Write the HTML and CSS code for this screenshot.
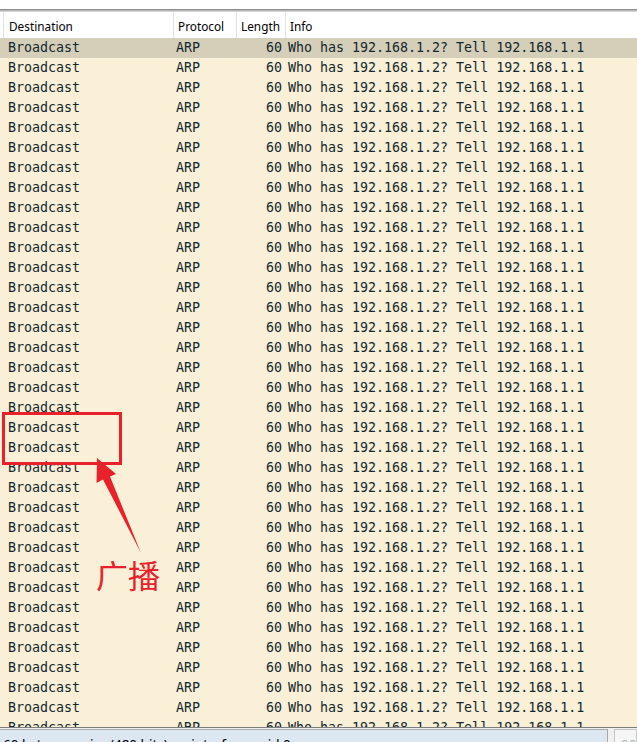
FILE: index.html
```html
<!DOCTYPE html>
<html>
<head>
<meta charset="utf-8">
<link rel="stylesheet" href="styles.css">
</head>
<body>
<div class="app">
  <div class="topstrip"></div>
  <div class="rule"></div>
  <div class="header">
    <div class="hcell dest">Destination</div>
    <div class="hcell">Protocol</div>
    <div class="hcell">Length</div>
    <div class="hcell info">Info</div>
  </div>
  <div class="list" id="list">
    <div class="row sel"><span class="c1">Broadcast</span><span class="c2">ARP</span><span class="c3">60</span><span class="c4">Who has 192.168.1.2? Tell 192.168.1.1</span></div>
  </div>
  <div class="status">
    <div class="field">60 bytes on wire (480 bits) on interface unid 0</div>
    <div class="field2">00</div>
  </div>
</div>
<script>
  var list = document.getElementById('list');
  for (var i = 0; i < 34; i++) {
    var r = document.createElement('div');
    r.className = 'row';
    r.innerHTML = '<span class="c1">Broadcast</span><span class="c2">ARP</span><span class="c3">60</span><span class="c4">Who has 192.168.1.2? Tell 192.168.1.1</span>';
    list.appendChild(r);
  }
  var note = document.createElement('div');
  note.className = 'note';
  note.innerHTML = '<div class="box"></div>' +
    '<svg class="arrow" width="637" height="700" viewBox="0 0 637 700"><polygon points="97,420 116,436 110,438.5 141,515 103,441.5 96.5,445" fill="#e8212a"/></svg>' +
    '<div class="label">广播</div>';
  list.appendChild(note);
</script>
</body>
</html>
```
FILE: styles.css
```css
html, body {
  margin: 0;
  padding: 0;
  background: #ffffff;
}
.app {
  width: 637px;
  height: 742px;
  overflow: hidden;
  display: flex;
  flex-direction: column;
}
.topstrip {
  height: 9px;
  background: #ffffff;
  flex: none;
}
.rule {
  height: 1px;
  border-top: 1px solid #8e8e8e;
  border-bottom: 1px solid #d4d4d4;
  background: #b8b8b8;
  flex: none;
}
.header {
  height: 26px;
  flex: none;
  display: grid;
  grid-template-columns: 173px 63px 49px 1fr;
  font-family: "Noto Sans", "Liberation Sans", sans-serif;
  font-size: 11.8px;
  color: #000000;
  background: #ffffff;
}
.hcell {
  border-left: 1px solid #e3e3e3;
  padding-left: 4px;
  line-height: 28px;
  white-space: nowrap;
  overflow: hidden;
}
.hcell.dest {
  margin-left: 3px;
  padding-left: 5px;
}
.hcell.info {
  padding-left: 4px;
}
.list {
  height: 689px;
  flex: none;
  overflow: hidden;
  background: #faf0d8;
  position: relative;
}
.row {
  height: 20px;
  display: grid;
  grid-template-columns: 173px 63px 49px 1fr;
  font-family: "DejaVu Sans Mono", "Liberation Mono", monospace;
  font-size: 13.3px;
  line-height: 20px;
  color: #12272e;
  background: #faf0d8;
  white-space: nowrap;
}
.row.sel {
  background: #d5ceb9;
}
.c1 { padding-left: 8px; }
.c2 { padding-left: 3px; }
.c3 { text-align: right; padding-right: 3px; }
.c4 { padding-left: 3px; }
.note {
  position: absolute;
  left: 0;
  top: 0;
  width: 637px;
  height: 689px;
  pointer-events: none;
}
.box {
  position: absolute;
  left: 2px;
  top: 374px;
  width: 114px;
  height: 47px;
  border: 3px solid #e8212a;
}
.arrow {
  position: absolute;
  left: 0;
  top: 0;
}
.label {
  position: absolute;
  left: 96px;
  top: 516px;
  font-family: "Noto Sans CJK SC", sans-serif;
  font-size: 32px;
  line-height: 40px;
  color: #e8212a;
  white-space: nowrap;
}
.status {
  flex: none;
  height: 20px;
  border-top: 1px solid #7d7d7d;
  background: #f0f0f0;
  display: flex;
  padding-top: 1px;
  gap: 6px;
}
.field {
  width: 604px;
  height: 20px;
  border: 1px solid #a9a9a9;
  border-left: none;
  background: #dce7f1;
  font-family: "Noto Sans", "Liberation Sans", sans-serif;
  font-size: 13.5px;
  line-height: 30px;
  padding-left: 3px;
  color: #000000;
  white-space: nowrap;
  overflow: hidden;
}
.field2 {
  flex: 1;
  height: 20px;
  border: 1px solid #c8c8c8;
  background: #f6f6f6;
  font-family: "Noto Sans", "Liberation Sans", sans-serif;
  font-size: 13.5px;
  line-height: 30px;
  padding-left: 6px;
  color: #b5b5b5;
  overflow: hidden;
}
```
